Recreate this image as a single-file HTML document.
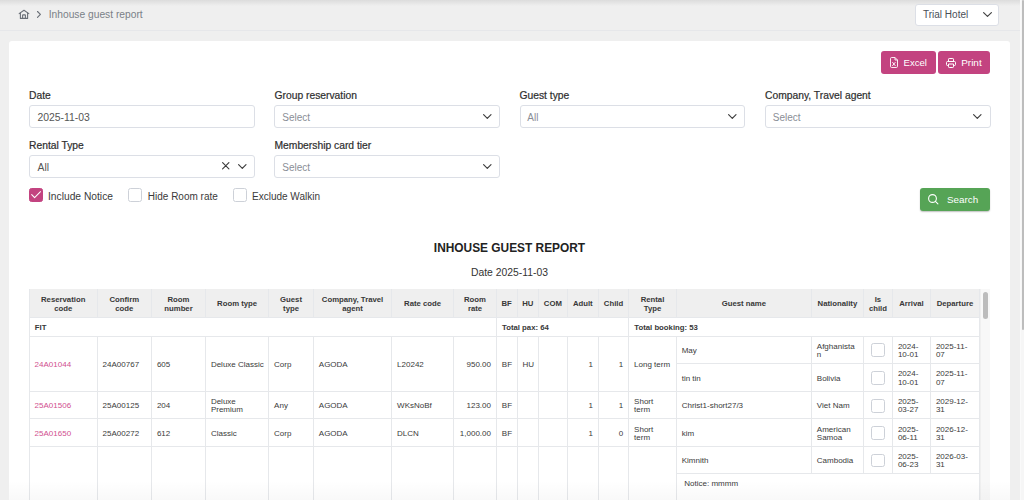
<!DOCTYPE html>
<html><head><meta charset="utf-8">
<style>
*{box-sizing:border-box;margin:0;padding:0}
html,body{width:1024px;height:500px;overflow:hidden}
body{position:relative;background:#efefef;font-family:"Liberation Sans",sans-serif;color:#333}
.abs{position:absolute}
.t{position:absolute;white-space:nowrap;line-height:1}
#topshadow{position:absolute;left:0;top:0;width:1024px;height:6px;background:linear-gradient(#dcdcdc,rgba(239,239,239,0))}
#hline{position:absolute;left:0;top:30px;width:1020px;height:1px;background:#e6e7ea}
#pscroll{position:absolute;left:1020px;top:0;width:4px;height:500px;background:#f6f6f6;border-left:1px solid #fafafa}
#pthumb{position:absolute;left:1022px;top:0;width:2px;height:330px;background:#bdbdbd;border-radius:1px}
.sel{position:absolute;background:#fff;border:1px solid #dcdfe6;border-radius:3px}
#card{position:absolute;left:9px;top:41px;width:1001px;height:470px;background:#fff;border-radius:3px}
.btn{position:absolute;border-radius:3px;background:#c34380;color:#fff}
.lbl{position:absolute;white-space:nowrap;line-height:1;font-size:10.3px;color:#2e2e2e;-webkit-text-stroke:0.2px #2e2e2e}
.inp{position:absolute;background:#fff;border:1px solid #dcdfe6;border-radius:3px;width:225.5px;height:23px}
.ph{position:absolute;white-space:nowrap;line-height:1;font-size:10px;color:#8a8e96}
.val{position:absolute;white-space:nowrap;line-height:1;font-size:10.4px;color:#555}
.cb{position:absolute;width:14px;height:14px;border:1px solid #cdd1d8;border-radius:2.5px;background:#fff}
.cbt{position:absolute;white-space:nowrap;line-height:1;font-size:10px;color:#3a3a3a}
svg{position:absolute;overflow:visible}
.hl{position:absolute;height:1px;background:#e6e8eb}
.vl{position:absolute;width:1px;background:#e6e8eb}
.th{position:absolute;white-space:nowrap;font-size:7.75px;font-weight:700;color:#383838}
.td{position:absolute;white-space:nowrap;font-size:8px;color:#3a3a3a}
.tcb{position:absolute;width:13.7px;height:13.7px;border:1px solid #cdd1d8;border-radius:2.5px;background:#fff}

</style></head>
<body>
<div id="topshadow"></div>
<div id="hline"></div>

<!-- breadcrumb -->
<svg style="left:18px;top:9px" width="12" height="11" viewBox="0 0 12 11" fill="none" stroke="#6b7078" stroke-width="1.1" stroke-linecap="round" stroke-linejoin="round">
  <path d="M1.2 4.6 L6 1.2 L10.8 4.6"/>
  <path d="M2.4 3.8 V9.4 H9.6 V3.8"/>
  <path d="M4.6 9.4 V6.3 Q4.6 5.9 5 5.9 H7 Q7.4 5.9 7.4 6.3 V9.4"/>
</svg>
<svg style="left:36px;top:10px" width="6" height="9" viewBox="0 0 6 9" fill="none" stroke="#6b7078" stroke-width="1.15" stroke-linecap="round" stroke-linejoin="round">
  <path d="M1.5 1.5 L4.4 4.4 L1.5 7.3"/>
</svg>
<div class="t" style="left:48.7px;top:9.7px;font-size:10.25px;color:#7a7f87">Inhouse guest report</div>

<!-- hotel select -->
<div class="sel" style="left:915px;top:3.5px;width:84px;height:22px"></div>
<div class="t" style="left:923px;top:9.7px;font-size:10px;color:#4a4f57">Trial Hotel</div>
<svg style="left:983px;top:12px" width="9" height="5" viewBox="0 0 9 5" fill="none" stroke="#444" stroke-width="1.2" stroke-linecap="round" stroke-linejoin="round">
  <path d="M0.6 0.6 L4.5 4.4 L8.4 0.6"/>
</svg>

<div id="card"></div>

<!-- buttons -->
<div class="btn" style="left:880.5px;top:51px;width:55px;height:23px"></div>
<svg style="left:889.5px;top:57px" width="8" height="11" viewBox="0 0 8 11" fill="none" stroke="#fff" stroke-width="0.9" stroke-linejoin="round">
  <path d="M1.5 0.5 H5 L7.5 3 V9.3 Q7.5 10.5 6.3 10.5 H1.7 Q0.5 10.5 0.5 9.3 V1.7 Q0.5 0.5 1.5 0.5 Z M5 0.5 V3 H7.5"/>
  <path d="M2.6 5.4 L5.2 8.6 M5.2 5.4 L2.6 8.6" stroke-linecap="round"/>
</svg>
<div class="t" style="left:903.5px;top:58px;font-size:9.6px;color:#fff">Excel</div>
<div class="btn" style="left:938px;top:51px;width:52px;height:23px"></div>
<svg style="left:946px;top:57.5px" width="10" height="10" viewBox="0 0 10 10" fill="none" stroke="#fff" stroke-width="1" stroke-linejoin="round">
  <path d="M2.5 3.5 V1.2 Q2.5 0.5 3.2 0.5 H6.8 Q7.5 0.5 7.5 1.2 V3.5"/>
  <path d="M2.5 7.5 H1.5 Q0.5 7.5 0.5 6.5 V4.5 Q0.5 3.5 1.5 3.5 H8.5 Q9.5 3.5 9.5 4.5 V6.5 Q9.5 7.5 8.5 7.5 H7.5"/>
  <path d="M2.5 6 H7.5 V8.8 Q7.5 9.5 6.8 9.5 H3.2 Q2.5 9.5 2.5 8.8 Z"/>
</svg>
<div class="t" style="left:961.2px;top:58px;font-size:9.97px;color:#fff">Print</div>

<!-- row 1 labels -->
<div class="lbl" style="left:29px;top:91px">Date</div>
<div class="lbl" style="left:274.5px;top:91px">Group reservation</div>
<div class="lbl" style="left:519.5px;top:91px">Guest type</div>
<div class="lbl" style="left:765px;top:91px">Company, Travel agent</div>
<!-- row 1 inputs -->
<div class="inp" style="left:29px;top:105px"></div>
<div class="val" style="left:37.5px;top:113px">2025-11-03</div>
<div class="inp" style="left:274px;top:105px"></div>
<div class="ph" style="left:282.3px;top:113px">Select</div>
<div class="inp" style="left:519.5px;top:105px"></div>
<div class="ph" style="left:527.3px;top:113px">All</div>
<div class="inp" style="left:765px;top:105px"></div>
<div class="ph" style="left:772.8px;top:113px">Select</div>
<!-- row 2 -->
<div class="lbl" style="left:29px;top:140.6px">Rental Type</div>
<div class="lbl" style="left:274.5px;top:140.6px">Membership card tier</div>
<div class="inp" style="left:29px;top:155px"></div>
<div class="val" style="left:37.5px;top:162.6px">All</div>
<div class="inp" style="left:274px;top:155px"></div>
<div class="ph" style="left:282.3px;top:162.6px">Select</div>

<!-- checkboxes -->
<div class="cb" style="left:29px;top:187.5px;background:#c34380;border-color:#c34380"></div>
<svg style="left:31px;top:191px" width="10" height="8" viewBox="0 0 10 8" fill="none" stroke="#fff" stroke-width="1.05" stroke-linecap="round" stroke-linejoin="round">
  <path d="M0.7 3.6 L3.6 6.7 L9.5 0.7"/>
</svg>
<div class="cbt" style="left:48px;top:191.5px;font-size:10.25px">Include Notice</div>
<div class="cb" style="left:128.3px;top:187.5px"></div>
<div class="cbt" style="left:147.8px;top:191.5px">Hide Room rate</div>
<div class="cb" style="left:232.5px;top:187.5px"></div>
<div class="cbt" style="left:252px;top:191.5px">Exclude Walkin</div>

<!-- search -->
<div class="btn" style="left:920px;top:187.5px;width:70px;height:23px;background:#56a456;box-shadow:0 1px 1.5px rgba(0,0,0,0.25)"></div>
<svg style="left:927.6px;top:193.6px" width="11" height="11" viewBox="0 0 11 11" fill="none" stroke="#fff" stroke-width="1.1" stroke-linecap="round">
  <circle cx="4.5" cy="4.5" r="3.9"/><path d="M7.4 7.4 L9.9 9.9"/>
</svg>
<div class="t" style="left:947px;top:194.5px;font-size:9.85px;color:#fff">Search</div>

<!-- title -->
<div class="t" style="left:0;width:1019px;text-align:center;top:243.4px;font-size:11.9px;font-weight:700;color:#222">INHOUSE GUEST REPORT</div>
<div class="t" style="left:0;width:1019px;text-align:center;top:268.4px;font-size:10.36px;color:#333">Date 2025-11-03</div>
<svg style="left:482.7px;top:114.3px" width="9" height="5.5" viewBox="0 0 9 5.5" fill="none" stroke="#3d3d3d" stroke-width="1.15" stroke-linecap="round" stroke-linejoin="round"><path d="M0.6 0.6 L4.3 4.3 L8 0.6"/></svg>
<svg style="left:727.7px;top:114.3px" width="9" height="5.5" viewBox="0 0 9 5.5" fill="none" stroke="#3d3d3d" stroke-width="1.15" stroke-linecap="round" stroke-linejoin="round"><path d="M0.6 0.6 L4.3 4.3 L8 0.6"/></svg>
<svg style="left:973.2px;top:114.3px" width="9" height="5.5" viewBox="0 0 9 5.5" fill="none" stroke="#3d3d3d" stroke-width="1.15" stroke-linecap="round" stroke-linejoin="round"><path d="M0.6 0.6 L4.3 4.3 L8 0.6"/></svg>
<svg style="left:482.7px;top:164.3px" width="9" height="5.5" viewBox="0 0 9 5.5" fill="none" stroke="#3d3d3d" stroke-width="1.15" stroke-linecap="round" stroke-linejoin="round"><path d="M0.6 0.6 L4.3 4.3 L8 0.6"/></svg>
<svg style="left:237.7px;top:164.3px" width="9" height="5.5" viewBox="0 0 9 5.5" fill="none" stroke="#3d3d3d" stroke-width="1.15" stroke-linecap="round" stroke-linejoin="round"><path d="M0.6 0.6 L4.3 4.3 L8 0.6"/></svg>
<svg style="left:221.7px;top:162.4px" width="8" height="8" viewBox="0 0 8 8" fill="none" stroke="#3d3d3d" stroke-width="1.15" stroke-linecap="round"><path d="M0.6 0.6 L6.9 6.9 M6.9 0.6 L0.6 6.9"/></svg>
<!--TABLE-->
<div class="abs" style="left:29.2px;top:289.2px;width:950.2px;height:28.2px;background:#efefef"></div>
<div class="vl" style="left:28.7px;top:289.2px;height:28.2px"></div>
<div class="vl" style="left:96.7px;top:289.2px;height:28.2px"></div>
<div class="vl" style="left:151.0px;top:289.2px;height:28.2px"></div>
<div class="vl" style="left:205.0px;top:289.2px;height:28.2px"></div>
<div class="vl" style="left:268.2px;top:289.2px;height:28.2px"></div>
<div class="vl" style="left:312.9px;top:289.2px;height:28.2px"></div>
<div class="vl" style="left:391.2px;top:289.2px;height:28.2px"></div>
<div class="vl" style="left:453.1px;top:289.2px;height:28.2px"></div>
<div class="vl" style="left:495.9px;top:289.2px;height:28.2px"></div>
<div class="vl" style="left:516.5px;top:289.2px;height:28.2px"></div>
<div class="vl" style="left:538.0px;top:289.2px;height:28.2px"></div>
<div class="vl" style="left:566.8px;top:289.2px;height:28.2px"></div>
<div class="vl" style="left:597.8px;top:289.2px;height:28.2px"></div>
<div class="vl" style="left:628.2px;top:289.2px;height:28.2px"></div>
<div class="vl" style="left:675.8px;top:289.2px;height:28.2px"></div>
<div class="vl" style="left:810.9px;top:289.2px;height:28.2px"></div>
<div class="vl" style="left:862.9px;top:289.2px;height:28.2px"></div>
<div class="vl" style="left:892.0px;top:289.2px;height:28.2px"></div>
<div class="vl" style="left:930.0px;top:289.2px;height:28.2px"></div>
<div class="vl" style="left:978.9px;top:289.2px;height:28.2px"></div>
<div class="hl" style="left:29.2px;top:316.9px;width:950.2px"></div>
<div class="hl" style="left:29.2px;top:335.7px;width:950.2px"></div>
<div class="hl" style="left:29.2px;top:391.1px;width:950.2px"></div>
<div class="hl" style="left:29.2px;top:418.4px;width:950.2px"></div>
<div class="hl" style="left:29.2px;top:446.0px;width:950.2px"></div>
<div class="hl" style="left:676.3px;top:362.8px;width:303.1px"></div>
<div class="hl" style="left:676.3px;top:473.0px;width:303.1px"></div>
<div class="vl" style="left:28.7px;top:317.4px;height:18.8px"></div>
<div class="vl" style="left:495.9px;top:317.4px;height:18.8px"></div>
<div class="vl" style="left:628.2px;top:317.4px;height:18.8px"></div>
<div class="vl" style="left:978.9px;top:317.4px;height:18.8px"></div>
<div class="vl" style="left:28.7px;top:336.2px;height:163.8px"></div>
<div class="vl" style="left:96.7px;top:336.2px;height:163.8px"></div>
<div class="vl" style="left:151.0px;top:336.2px;height:163.8px"></div>
<div class="vl" style="left:205.0px;top:336.2px;height:163.8px"></div>
<div class="vl" style="left:268.2px;top:336.2px;height:163.8px"></div>
<div class="vl" style="left:312.9px;top:336.2px;height:163.8px"></div>
<div class="vl" style="left:391.2px;top:336.2px;height:163.8px"></div>
<div class="vl" style="left:453.1px;top:336.2px;height:163.8px"></div>
<div class="vl" style="left:495.9px;top:336.2px;height:163.8px"></div>
<div class="vl" style="left:516.5px;top:336.2px;height:163.8px"></div>
<div class="vl" style="left:538.0px;top:336.2px;height:163.8px"></div>
<div class="vl" style="left:566.8px;top:336.2px;height:163.8px"></div>
<div class="vl" style="left:597.8px;top:336.2px;height:163.8px"></div>
<div class="vl" style="left:628.2px;top:336.2px;height:163.8px"></div>
<div class="vl" style="left:675.8px;top:336.2px;height:163.8px"></div>
<div class="vl" style="left:810.9px;top:336.2px;height:137.3px"></div>
<div class="vl" style="left:862.9px;top:336.2px;height:137.3px"></div>
<div class="vl" style="left:892.0px;top:336.2px;height:137.3px"></div>
<div class="vl" style="left:930.0px;top:336.2px;height:137.3px"></div>
<div class="vl" style="left:978.9px;top:336.2px;height:163.8px"></div>
<div class="th" style="left:29.2px;top:295.11px;line-height:9px;width:68.0px;text-align:center;">Reservation<br>code</div>
<div class="th" style="left:97.2px;top:295.11px;line-height:9px;width:54.3px;text-align:center;">Confirm<br>code</div>
<div class="th" style="left:151.5px;top:295.11px;line-height:9px;width:54.0px;text-align:center;">Room<br>number</div>
<div class="th" style="left:205.5px;top:300.36px;line-height:8.5px;width:63.2px;text-align:center;">Room type</div>
<div class="th" style="left:268.7px;top:295.11px;line-height:9px;width:44.7px;text-align:center;">Guest<br>type</div>
<div class="th" style="left:313.4px;top:295.11px;line-height:9px;width:78.3px;text-align:center;">Company, Travel<br>agent</div>
<div class="th" style="left:391.7px;top:300.36px;line-height:8.5px;width:61.9px;text-align:center;">Rate code</div>
<div class="th" style="left:453.6px;top:295.11px;line-height:9px;width:42.8px;text-align:center;">Room<br>rate</div>
<div class="th" style="left:496.4px;top:300.36px;line-height:8.5px;width:20.6px;text-align:center;">BF</div>
<div class="th" style="left:517.0px;top:300.36px;line-height:8.5px;width:21.5px;text-align:center;">HU</div>
<div class="th" style="left:538.5px;top:300.36px;line-height:8.5px;width:28.8px;text-align:center;">COM</div>
<div class="th" style="left:567.3px;top:300.36px;line-height:8.5px;width:31.0px;text-align:center;">Adult</div>
<div class="th" style="left:598.3px;top:300.36px;line-height:8.5px;width:30.4px;text-align:center;">Child</div>
<div class="th" style="left:628.7px;top:295.11px;line-height:9px;width:47.6px;text-align:center;">Rental<br>Type</div>
<div class="th" style="left:676.3px;top:300.36px;line-height:8.5px;width:135.1px;text-align:center;">Guest name</div>
<div class="th" style="left:811.4px;top:300.36px;line-height:8.5px;width:52.0px;text-align:center;">Nationality</div>
<div class="th" style="left:863.4px;top:295.11px;line-height:9px;width:29.1px;text-align:center;">Is<br>child</div>
<div class="th" style="left:892.5px;top:300.36px;line-height:8.5px;width:38.0px;text-align:center;">Arrival</div>
<div class="th" style="left:930.5px;top:300.36px;line-height:8.5px;width:48.9px;text-align:center;">Departure</div>
<div class="th" style="left:34.8px;top:323.86px;line-height:8.5px;">FIT</div>
<div class="th" style="left:502.0px;top:323.86px;line-height:8.5px;">Total pax: 64</div>
<div class="th" style="left:634.3px;top:323.86px;line-height:8.5px;">Total booking: 53</div>
<div class="td" style="left:34.6px;top:360.98px;line-height:8.1px;color:#d14f8f;">24A01044</div>
<div class="td" style="left:102.6px;top:360.98px;line-height:8.1px;">24A00767</div>
<div class="td" style="left:156.9px;top:360.98px;line-height:8.1px;">605</div>
<div class="td" style="left:210.9px;top:360.98px;line-height:8.1px;">Deluxe Classic</div>
<div class="td" style="left:274.1px;top:360.98px;line-height:8.1px;">Corp</div>
<div class="td" style="left:318.8px;top:360.98px;line-height:8.1px;">AGODA</div>
<div class="td" style="left:397.1px;top:360.98px;line-height:8.1px;">L20242</div>
<div class="td" style="left:453.6px;top:360.98px;line-height:8.1px;width:37.4px;text-align:right;">950.00</div>
<div class="td" style="left:501.8px;top:360.98px;line-height:8.1px;">BF</div>
<div class="td" style="left:522.4px;top:360.98px;line-height:8.1px;">HU</div>
<div class="td" style="left:567.3px;top:360.98px;line-height:8.1px;width:25.6px;text-align:right;">1</div>
<div class="td" style="left:598.3px;top:360.98px;line-height:8.1px;width:25.0px;text-align:right;">1</div>
<div class="td" style="left:634.1px;top:360.98px;line-height:8.1px;">Long term</div>
<div class="td" style="left:34.6px;top:402.38px;line-height:8.1px;color:#d14f8f;">25A01506</div>
<div class="td" style="left:102.6px;top:402.38px;line-height:8.1px;">25A00125</div>
<div class="td" style="left:156.9px;top:402.38px;line-height:8.1px;">204</div>
<div class="td" style="left:210.9px;top:398.33px;line-height:8.1px;">Deluxe<br>Premium</div>
<div class="td" style="left:274.1px;top:402.38px;line-height:8.1px;">Any</div>
<div class="td" style="left:318.8px;top:402.38px;line-height:8.1px;">AGODA</div>
<div class="td" style="left:397.1px;top:402.38px;line-height:8.1px;">WKsNoBf</div>
<div class="td" style="left:453.6px;top:402.38px;line-height:8.1px;width:37.4px;text-align:right;">123.00</div>
<div class="td" style="left:501.8px;top:402.38px;line-height:8.1px;">BF</div>
<div class="td" style="left:567.3px;top:402.38px;line-height:8.1px;width:25.6px;text-align:right;">1</div>
<div class="td" style="left:598.3px;top:402.38px;line-height:8.1px;width:25.0px;text-align:right;">1</div>
<div class="td" style="left:634.1px;top:398.33px;line-height:8.1px;">Short<br>term</div>
<div class="td" style="left:34.6px;top:429.78px;line-height:8.1px;color:#d14f8f;">25A01650</div>
<div class="td" style="left:102.6px;top:429.78px;line-height:8.1px;">25A00272</div>
<div class="td" style="left:156.9px;top:429.78px;line-height:8.1px;">612</div>
<div class="td" style="left:210.9px;top:429.78px;line-height:8.1px;">Classic</div>
<div class="td" style="left:274.1px;top:429.78px;line-height:8.1px;">Corp</div>
<div class="td" style="left:318.8px;top:429.78px;line-height:8.1px;">AGODA</div>
<div class="td" style="left:397.1px;top:429.78px;line-height:8.1px;">DLCN</div>
<div class="td" style="left:453.6px;top:429.78px;line-height:8.1px;width:37.4px;text-align:right;">1,000.00</div>
<div class="td" style="left:501.8px;top:429.78px;line-height:8.1px;">BF</div>
<div class="td" style="left:567.3px;top:429.78px;line-height:8.1px;width:25.6px;text-align:right;">1</div>
<div class="td" style="left:598.3px;top:429.78px;line-height:8.1px;width:25.0px;text-align:right;">0</div>
<div class="td" style="left:634.1px;top:425.73px;line-height:8.1px;">Short<br>term</div>
<div class="td" style="left:681.7px;top:346.83px;line-height:8.1px;">May</div>
<div class="td" style="left:816.8px;top:342.78px;line-height:8.1px;">Afghanista<br>n</div>
<div class="td" style="left:897.9px;top:342.78px;line-height:8.1px;">2024-<br>10-01</div>
<div class="td" style="left:935.9px;top:342.78px;line-height:8.1px;">2025-11-<br>07</div>
<div class="tcb" style="left:871.3px;top:343.40px"></div>
<div class="td" style="left:681.7px;top:374.53px;line-height:8.1px;">tin tin</div>
<div class="td" style="left:816.8px;top:374.53px;line-height:8.1px;">Bolivia</div>
<div class="td" style="left:897.9px;top:370.48px;line-height:8.1px;">2024-<br>10-01</div>
<div class="td" style="left:935.9px;top:370.48px;line-height:8.1px;">2025-11-<br>07</div>
<div class="tcb" style="left:871.3px;top:371.10px"></div>
<div class="td" style="left:681.7px;top:402.38px;line-height:8.1px;">Christ1-short27/3</div>
<div class="td" style="left:816.8px;top:402.38px;line-height:8.1px;">Viet Nam</div>
<div class="td" style="left:897.9px;top:398.33px;line-height:8.1px;">2025-<br>03-27</div>
<div class="td" style="left:935.9px;top:398.33px;line-height:8.1px;">2029-12-<br>31</div>
<div class="tcb" style="left:871.3px;top:398.95px"></div>
<div class="td" style="left:681.7px;top:429.78px;line-height:8.1px;">kim</div>
<div class="td" style="left:816.8px;top:425.73px;line-height:8.1px;">American<br>Samoa</div>
<div class="td" style="left:897.9px;top:425.73px;line-height:8.1px;">2025-<br>06-11</div>
<div class="td" style="left:935.9px;top:425.73px;line-height:8.1px;">2026-12-<br>31</div>
<div class="tcb" style="left:871.3px;top:426.35px"></div>
<div class="td" style="left:681.7px;top:457.08px;line-height:8.1px;">Kimnith</div>
<div class="td" style="left:816.8px;top:457.08px;line-height:8.1px;">Cambodia</div>
<div class="td" style="left:897.9px;top:453.03px;line-height:8.1px;">2025-<br>06-23</div>
<div class="td" style="left:935.9px;top:453.03px;line-height:8.1px;">2026-03-<br>31</div>
<div class="tcb" style="left:871.3px;top:453.65px"></div>
<div class="td" style="left:684.3px;top:479.68px;line-height:8.1px;">Notice: mmmm</div>
<div class="abs" style="left:979.6px;top:289.2px;width:10px;height:211px;background:#f8f8f8;border-left:1px solid #f0f0f0"></div>
<div class="abs" style="left:982.6px;top:291.8px;width:5.2px;height:27.2px;background:#bcbcbc;border-radius:2.6px"></div>
<!--/TABLE-->
<div class="abs" style="left:9px;top:480px;width:1001px;height:20px;background:linear-gradient(rgba(0,0,0,0),rgba(0,0,0,0.025))"></div>
<div id="pscroll"></div>
<div id="pthumb"></div>

</body></html>
